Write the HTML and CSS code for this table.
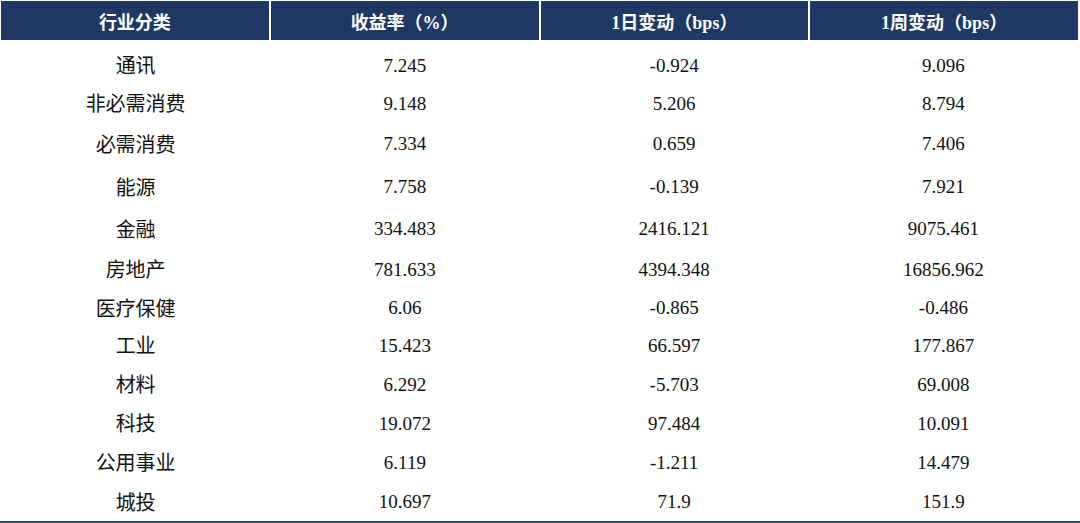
FILE: index.html
```html
<!DOCTYPE html>
<html lang="zh-CN">
<head>
<meta charset="utf-8">
<title>行业收益率</title>
<link rel="stylesheet" href="styles.css">
</head>
<body>
<div class="table">
  <div class="head">
    <div class="hc">行业分类</div>
    <div class="hc">收益率（%）</div>
    <div class="hc">1日变动（bps）</div>
    <div class="hc">1周变动（bps）</div>
  </div>
  <div class="rows">
    <div class="row h38"><div class="name">通讯</div><div class="num">7.245</div><div class="num">-0.924</div><div class="num">9.096</div></div>
    <div class="row h38"><div class="name">非必需消费</div><div class="num">9.148</div><div class="num">5.206</div><div class="num">8.794</div></div>
    <div class="row h43"><div class="name">必需消费</div><div class="num">7.334</div><div class="num">0.659</div><div class="num">7.406</div></div>
    <div class="row h43"><div class="name">能源</div><div class="num">7.758</div><div class="num">-0.139</div><div class="num">7.921</div></div>
    <div class="row h41"><div class="name">金融</div><div class="num">334.483</div><div class="num">2416.121</div><div class="num">9075.461</div></div>
    <div class="row h40"><div class="name">房地产</div><div class="num">781.633</div><div class="num">4394.348</div><div class="num">16856.962</div></div>
    <div class="row h37"><div class="name">医疗保健</div><div class="num">6.06</div><div class="num">-0.865</div><div class="num">-0.486</div></div>
    <div class="row h38"><div class="name">工业</div><div class="num">15.423</div><div class="num">66.597</div><div class="num">177.867</div></div>
    <div class="row h40"><div class="name">材料</div><div class="num">6.292</div><div class="num">-5.703</div><div class="num">69.008</div></div>
    <div class="row h38"><div class="name">科技</div><div class="num">19.072</div><div class="num">97.484</div><div class="num">10.091</div></div>
    <div class="row h40"><div class="name">公用事业</div><div class="num">6.119</div><div class="num">-1.211</div><div class="num">14.479</div></div>
    <div class="row h39"><div class="name">城投</div><div class="num">10.697</div><div class="num">71.9</div><div class="num">151.9</div></div>
  </div>
</div>
</body>
</html>
```

FILE: styles.css
```css
html, body {
  margin: 0;
  padding: 0;
  background: #ffffff;
}

.table {
  width: 1080px;
  padding: 1px 2px 0 1px;
  box-sizing: border-box;
  font-family: "Liberation Serif", "Noto Sans CJK SC", serif;
  color: #111111;
}

.head {
  display: grid;
  grid-template-columns: 1fr 1fr 1fr 1fr;
  column-gap: 2px;
  height: 39px;
}

.hc {
  background: #1f3864;
  color: #ffffff;
  font-weight: bold;
  font-size: 18px;
  display: flex;
  align-items: center;
  justify-content: center;
}

.rows {
  margin-top: 6px;
  border-bottom: 2px solid #2f4b6e;
  margin-left: -1px;
  margin-right: -2px;
}

.row {
  display: grid;
  grid-template-columns: 1fr 1fr 1fr 1fr;
  align-items: center;
  justify-items: center;
  padding: 0 2px 0 1px;
}

.h37 { height: 37px; }
.h38 { height: 38px; }
.h39 { height: 39px; }
.h40 { height: 40px; }
.h41 { height: 41px; }
.h43 { height: 43px; }

.name {
  font-family: "Noto Sans CJK SC", sans-serif;
  font-size: 20px;
  line-height: 1;
}

.num {
  font-size: 19px;
  line-height: 1;
}
```
